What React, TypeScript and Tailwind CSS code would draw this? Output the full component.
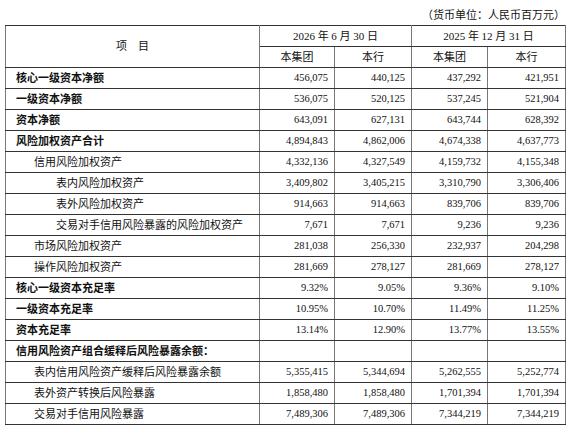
type Row = {
  label: string;
  level: 0 | 1 | 2;
  bold?: boolean;
  values: string[];
};

const rows: Row[] = [
  { label: "核心一级资本净额", level: 0, bold: true, values: ["456,075", "440,125", "437,292", "421,951"] },
  { label: "一级资本净额", level: 0, bold: true, values: ["536,075", "520,125", "537,245", "521,904"] },
  { label: "资本净额", level: 0, bold: true, values: ["643,091", "627,131", "643,744", "628,392"] },
  { label: "风险加权资产合计", level: 0, bold: true, values: ["4,894,843", "4,862,006", "4,674,338", "4,637,773"] },
  { label: "信用风险加权资产", level: 1, values: ["4,332,136", "4,327,549", "4,159,732", "4,155,348"] },
  { label: "表内风险加权资产", level: 2, values: ["3,409,802", "3,405,215", "3,310,790", "3,306,406"] },
  { label: "表外风险加权资产", level: 2, values: ["914,663", "914,663", "839,706", "839,706"] },
  { label: "交易对手信用风险暴露的风险加权资产", level: 2, values: ["7,671", "7,671", "9,236", "9,236"] },
  { label: "市场风险加权资产", level: 1, values: ["281,038", "256,330", "232,937", "204,298"] },
  { label: "操作风险加权资产", level: 1, values: ["281,669", "278,127", "281,669", "278,127"] },
  { label: "核心一级资本充足率", level: 0, bold: true, values: ["9.32%", "9.05%", "9.36%", "9.10%"] },
  { label: "一级资本充足率", level: 0, bold: true, values: ["10.95%", "10.70%", "11.49%", "11.25%"] },
  { label: "资本充足率", level: 0, bold: true, values: ["13.14%", "12.90%", "13.77%", "13.55%"] },
  { label: "信用风险资产组合缓释后风险暴露余额：", level: 0, bold: true, values: ["", "", "", ""] },
  { label: "表内信用风险资产缓释后风险暴露余额", level: 1, values: ["5,355,415", "5,344,694", "5,262,555", "5,252,774"] },
  { label: "表外资产转换后风险暴露", level: 1, values: ["1,858,480", "1,858,480", "1,701,394", "1,701,394"] },
  { label: "交易对手信用风险暴露", level: 1, values: ["7,489,306", "7,489,306", "7,344,219", "7,344,219"] },
];

const indent = ["pl-[10px]", "pl-[28px]", "pl-[50px]"];

function App() {
  return (
    <div
      className="w-[571px] h-[427px] bg-white text-[#111] pl-[5px] pr-[6px] overflow-hidden"
      style={{ fontFamily: '"Liberation Serif", "Noto Sans CJK SC", serif' }}
    >
      <div className="h-[25px] flex items-center justify-end text-[11px] pt-[6px]">
        （货币单位：人民币百万元）
      </div>
      <table className="table-fixed border-collapse w-[560px] text-[11px] leading-none">
        <colgroup>
          <col className="w-[254px]" />
          <col className="w-[75px]" />
          <col className="w-[77px]" />
          <col className="w-[76px]" />
          <col className="w-[78px]" />
        </colgroup>
        <thead>
          <tr className="h-[21px]">
            <th rowSpan={2} className="font-normal text-center border border-[#777] border-t-[#333] border-b-[#333]">
              项　目
            </th>
            <th colSpan={2} className="font-normal text-center border border-[#777] border-t-[#333] border-b-[#333]">
              2026 年 6 月 30 日
            </th>
            <th colSpan={2} className="font-normal text-center border border-[#777] border-t-[#333] border-b-[#333]">
              2025 年 12 月 31 日
            </th>
          </tr>
          <tr className="h-[21px]">
            {["本集团", "本行", "本集团", "本行"].map((h, i) => (
              <th key={i} className="font-normal text-center border border-[#777] border-t-[#333] border-b-[#333]">
                {h}
              </th>
            ))}
          </tr>
        </thead>
        <tbody>
          {rows.map((r, i) => (
            <tr key={i} className="h-[21px]">
              <td
                className={`${indent[r.level]} whitespace-nowrap border border-[#777] border-t-[#333] border-b-[#333] ${
                  r.bold ? "font-bold" : ""
                }`}
              >
                {r.label}
              </td>
              {r.values.map((v, j) => (
                <td key={j} className="text-right pr-[6px] text-[10.5px] border border-[#777] border-t-[#333] border-b-[#333]">
                  {v}
                </td>
              ))}
            </tr>
          ))}
        </tbody>
      </table>
    </div>
  );
}

export default App;
